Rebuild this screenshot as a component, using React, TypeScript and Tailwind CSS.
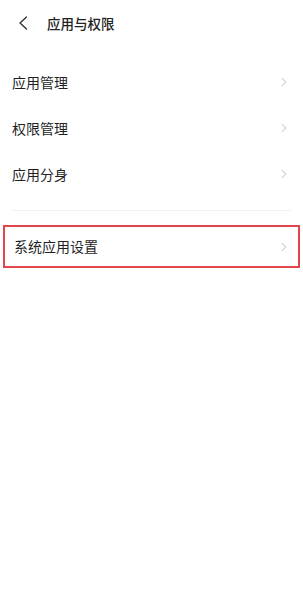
import { ChevronRight } from "lucide-react";

const font = { fontFamily: '"Noto Sans CJK SC", "Noto Sans", sans-serif' };

const items = ["应用管理", "权限管理", "应用分身"];

function Row({ label }: { label: string }) {
  return (
    <div className="flex h-[46px] items-center justify-between pl-3 pr-[12px]">
      <span className="text-[14px] text-[#1f1f1f]">{label}</span>
      <ChevronRight className="h-[14px] w-[14px] text-[#c4c4c4]" strokeWidth={1.8} />
    </div>
  );
}

export default function App() {
  return (
    <div className="h-[600px] w-[303px] bg-white" style={font}>
      <header className="flex h-[46px] items-center">
        <svg viewBox="0 0 10 14" className="ml-[18px] h-[14px] w-[10px]" fill="none">
          <path d="M8.5 1 L2 7 L8.5 13" stroke="#333" strokeWidth="1.4" strokeLinecap="round" strokeLinejoin="round" />
        </svg>
        <h1 className="ml-[19px] text-[13.5px] font-medium text-[#222]">应用与权限</h1>
      </header>

      <div className="pt-[13px]">
        {items.map((it) => (
          <Row key={it} label={it} />
        ))}
      </div>

      <div className="mx-3 mt-[13px] h-px bg-[#f0f0f0]" />

      <div className="mx-[3px] mt-[14px] h-[43px] border-2 border-[#e0464c]">
        <div className="flex h-full items-center justify-between pl-[9px] pr-[7px]">
          <span className="text-[14px] text-[#1f1f1f]">系统应用设置</span>
          <ChevronRight className="h-[14px] w-[14px] text-[#c4c4c4]" strokeWidth={1.8} />
        </div>
      </div>
    </div>
  );
}
